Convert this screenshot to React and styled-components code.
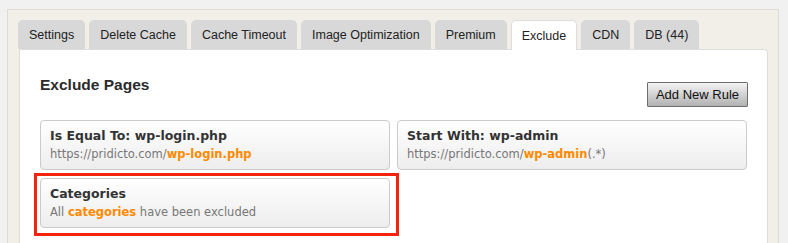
import React from 'react'
import styled, { createGlobalStyle } from 'styled-components';

const GlobalStyle = createGlobalStyle`
  html, body {
    margin: 0;
    padding: 0;
    background: #f1f1f1;
    font-family: "Liberation Sans", Arial, sans-serif;
  }
`;

const tabs = ["Settings", "Delete Cache", "Cache Timeout", "Image Optimization", "Premium", "Exclude", "CDN", "DB (44)"];

const rules = [
  { title: "Is Equal To: wp-login.php", prefix: "https://pridicto.com/", hl: "wp-login.php", suffix: "" },
  { title: "Start With: wp-admin", prefix: "https://pridicto.com/", hl: "wp-admin", suffix: "(.*)" },
  { title: "Categories", prefix: "All ", hl: "categories", suffix: " have been excluded", marked: true },
];

const App = () => {
  return <>
    <GlobalStyle />
    <Page>
      <Wrap>
        <TabBar>
          {tabs.map((t) => <Tab key={t} $active={t === "Exclude"}>{t}</Tab>)}
        </TabBar>
        <Panel>
          <Header>
            <Title>Exclude Pages</Title>
            <AddButton>Add New Rule</AddButton>
          </Header>
          <Grid>
            {rules.map((r) => (
              <Card key={r.title}>
                <CardTitle>{r.title}</CardTitle>
                <CardText>{r.prefix}<Hl>{r.hl}</Hl>{r.suffix}</CardText>
                {r.marked && <Mark />}
              </Card>
            ))}
          </Grid>
        </Panel>
      </Wrap>
    </Page>
  </>
}

const Page = styled.div`
  padding: 9px 9px 0 7px;
  height: 243px;
  box-sizing: border-box;
  overflow: hidden;
`;

const Wrap = styled.div`
  background: #f1efe8;
  border: 1px solid #dedbd3;
  border-bottom: none;
  padding: 10px 10px 0 10px;
  height: 240px;
`;

const TabBar = styled.div`
  display: flex;
  gap: 4px;
  height: 29px;
  position: relative;
  z-index: 1;
`;

const Tab = styled.div`
  padding: 0 10px;
  box-sizing: border-box;
  display: flex;
  align-items: center;
  font-size: 12.5px;
  color: #222;
  border-radius: 5px 5px 0 0;
  background: ${p => p.$active ? "#fff" : "#d8d8d8"};
  border: 1px solid ${p => p.$active ? "#ddd" : "#d8d8d8"};
  border-bottom: none;
  height: ${p => p.$active ? "30px" : "29px"};
`;

const Panel = styled.div`
  margin-left: 1px;
  background: #fff;
  border: 1px solid #ddd;
  border-top-right-radius: 4px;
  padding: 26px 19px 0 20px;
  height: 200px;
`;

const Header = styled.div`
  display: flex;
  justify-content: space-between;
  align-items: flex-start;
  height: 44px;
`;

const Title = styled.h2`
  margin: 0;
  font-size: 15.5px;
  font-weight: bold;
  color: #2b2b2b;
  line-height: 18px;
`;

const AddButton = styled.button`
  margin-top: 6px;
  width: 101px;
  height: 25px;
  padding: 0;
  font-family: "Liberation Sans", Arial, sans-serif;
  font-size: 13px;
  color: #111;
  border: 1px solid #6e6e6e;
  border-radius: 1px;
  background: linear-gradient(#f4f4f4, #b1b1b1);
`;

const Grid = styled.div`
  display: grid;
  grid-template-columns: 350px 350px;
  column-gap: 7px;
  row-gap: 8px;
`;

const Card = styled.div`
  position: relative;
  height: 50px;
  box-sizing: border-box;
  border: 1px solid #cbcbcb;
  border-radius: 4px;
  background: linear-gradient(#ffffff, #ededed);
  padding: 6px 9px 0;
  font-family: "DejaVu Sans", Verdana, sans-serif;
`;

const CardTitle = styled.div`
  font-size: 12.5px;
  font-weight: bold;
  color: #333;
  line-height: 18px;
`;

const CardText = styled.div`
  font-size: 11.5px;
  color: #777;
  line-height: 18px;
`;

const Hl = styled.span`
  color: #ff8a00;
  font-weight: bold;
`;

const Mark = styled.div`
  position: absolute;
  left: -7px;
  top: -6px;
  width: 365px;
  height: 63px;
  box-sizing: border-box;
  border: 3px solid #f4230e;
`;

export default App
